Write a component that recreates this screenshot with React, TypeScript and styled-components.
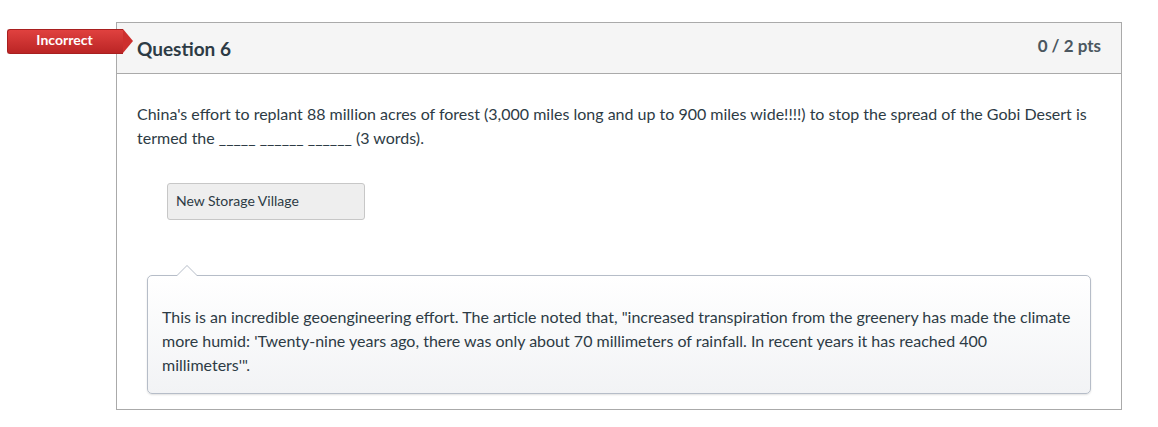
import React from 'react';
import styled, { createGlobalStyle } from 'styled-components';

const Global = createGlobalStyle`
  body {
    margin: 0;
    background: #fff;
    font-family: Lato, "Liberation Sans", sans-serif;
    color: #2d3b45;
  }
`

const Page = styled.div`
  padding: 22px 36px 0 116px;
  width: 1158px;
  box-sizing: border-box;
`
const Question = styled.div`
  position: relative;
  border: 1px solid #aaaaaa;
  background: #fff;
`
const Badge = styled.div`
  position: absolute;
  left: -110px;
  top: 6px;
  width: 116px;
  height: 25px;
  background: linear-gradient(#e0413f, #bb2525);
  border: 1px solid #a81f1f;
  border-right: none;
  border-radius: 3px 0 0 3px;
  color: #fff;
  font-size: 14px;
  font-weight: bold;
  line-height: 20px;
  box-sizing: border-box;
  display: flex;
  justify-content: center;
  padding-right: 2px;
  &::after {
    content: '';
    position: absolute;
    right: -10px;
    top: -1px;
    border-top: 12.5px solid transparent;
    border-bottom: 12.5px solid transparent;
    border-left: 10px solid #cd2f2e;
  }
`
const Header = styled.div`
  display: flex;
  justify-content: space-between;
  align-items: center;
  height: 50px;
  padding: 0 20px;
  background: #f5f5f5;
  border-bottom: 1px solid #aaaaaa;
`
const Title = styled.div`
  font-size: 19px;
  font-weight: bold;
`
const Points = styled.div`
  font-size: 17px;
  font-weight: bold;
  color: #4b5760;
  margin-top: -5px;
`
const Body = styled.div`
  padding: 28px 20px 15px 20px;
`
const Text = styled.div`
  font-size: 16px;
  line-height: 24px;
`
const Answer = styled.div`
  margin: 33px 0 0 30px;
  width: 198px;
  height: 37px;
  box-sizing: border-box;
  background: #eeeeee;
  border: 1px solid #c7c7c7;
  border-radius: 3px;
  padding: 0 8px 2px 8px;
  display: flex;
  align-items: center;
  font-size: 14px;
`
const Comment = styled.div`
  position: relative;
  margin: 55px 10px 0 10px;
  padding: 29px 14px 16px 14px;
  border: 1px solid #b6bdc8;
  border-radius: 5px;
  background: linear-gradient(#ffffff, #f2f3f5);
  box-shadow: 0 1px 2px rgba(0, 0, 0, 0.12);
  font-size: 16px;
  line-height: 24px;
  &::before {
    content: '';
    position: absolute;
    left: 28px;
    top: -11px;
    border-left: 11px solid transparent;
    border-right: 11px solid transparent;
    border-bottom: 11px solid #b6bdc8;
  }
  &::after {
    content: '';
    position: absolute;
    left: 29px;
    top: -10px;
    border-left: 10px solid transparent;
    border-right: 10px solid transparent;
    border-bottom: 10px solid #ffffff;
  }
`

export default function App() {
  return (
    <Page>
      <Global />
      <Question>
        <Badge>Incorrect</Badge>
        <Header>
          <Title>Question 6</Title>
          <Points>0 / 2 pts</Points>
        </Header>
        <Body>
          <Text>
            China's effort to replant 88 million acres of forest (3,000 miles long and up to 900 miles wide!!!!) to stop the spread of the Gobi Desert is termed the _____ ______ ______ (3 words).
          </Text>
          <Answer>New Storage Village</Answer>
          <Comment>
            This is an incredible geoengineering effort. The article noted that, "increased transpiration from the greenery has made the climate more humid: 'Twenty-nine years ago, there was only about 70 millimeters of rainfall. In recent years it has reached 400 millimeters'".
          </Comment>
        </Body>
      </Question>
    </Page>
  )
}
